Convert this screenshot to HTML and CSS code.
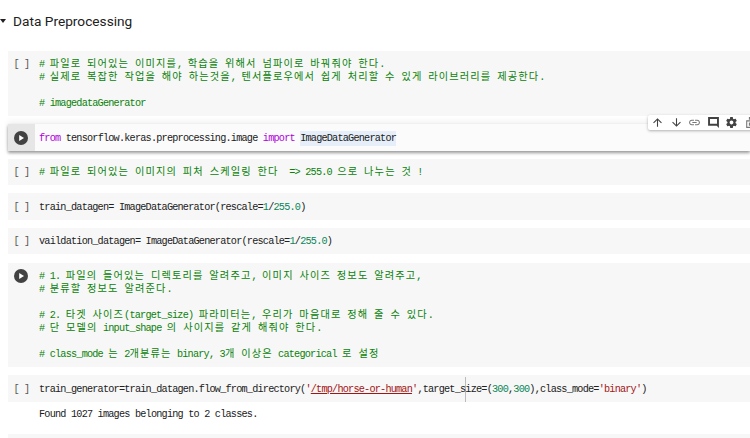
FILE: index.html
```html
<!DOCTYPE html>
<html lang="ko">
<head>
<meta charset="utf-8">
<title>Data Preprocessing</title>
<link rel="stylesheet" href="styles.css">
</head>
<body>
<header class="section">
  <svg class="caret" viewBox="0 0 6 4"><path d="M0 0h6L3 4z"/></svg>
  <h1>Data Preprocessing</h1>
</header>
<main class="cells">
  <section class="cell">
    <div class="gutter">[ ]</div>
<pre class="code com"># <span class="k">파일로 되어있는 이미지를</span>, <span class="k">학습을 위해서 넘파이로 바꿔줘야 한다</span>.
# <span class="k">실제로 복잡한 작업을 해야 하는것을</span>, <span class="k">텐서플로우에서 쉽게 처리할 수 있게 라이브러리를 제공한다</span>.

# imagedataGenerator</pre>
  </section>
  <section class="cell focus">
    <div class="gutter run">
      <svg class="play" viewBox="0 0 14 14"><circle cx="7" cy="7" r="7"/><path class="tri" d="M5.2 3.9v6.2L10 7z"/></svg>
    </div>
<pre class="code"><span class="kw">from</span> tensorflow.keras.preprocessing.image <span class="kw">import</span> <span class="sel">ImageDataGenerator</span></pre>
    <div class="toolbar">
      <svg viewBox="0 0 24 24"><path d="M4 12l1.41 1.41L11 7.83V20h2V7.83l5.58 5.59L20 12l-8-8-8 8z"/></svg>
      <svg viewBox="0 0 24 24"><path d="M20 12l-1.41-1.41L13 16.17V4h-2v12.17l-5.58-5.59L4 12l8 8 8-8z"/></svg>
      <svg viewBox="0 0 24 24"><path class="soft" d="M3.9 12c0-1.71 1.39-3.1 3.1-3.1h4V7H7c-2.76 0-5 2.24-5 5s2.24 5 5 5h4v-1.9H7c-1.71 0-3.1-1.39-3.1-3.1zM8 13h8v-2H8v2zm9-6h-4v1.9h4c1.71 0 3.1 1.39 3.1 3.1s-1.39 3.1-3.1 3.1h-4V17h4c2.76 0 5-2.24 5-5s-2.24-5-5-5z"/></svg>
      <svg viewBox="0 0 24 24"><path fill-rule="evenodd" d="M22 2H2v16h16l4 4V2zM18.500 14.500h-13v-9h13v9z"/></svg>
      <svg viewBox="0 0 24 24"><path d="M19.4 13c.04-.32.1-.66.1-1s-.06-.68-.1-1l2.1-1.65c.2-.15.25-.42.13-.64l-2-3.46c-.12-.22-.39-.3-.61-.22l-2.49 1c-.52-.4-1.08-.73-1.69-.98l-.38-2.65C14.46 2.18 14.25 2 14 2h-4c-.25 0-.46.18-.49.42l-.38 2.65c-.61.25-1.17.59-1.69.98l-2.49-1c-.23-.09-.49 0-.61.22l-2 3.46c-.13.22-.07.49.12.64L4.57 11c-.04.32-.07.66-.07 1s.03.68.07 1l-2.11 1.65c-.19.15-.25.42-.12.64l2 3.46c.12.22.39.3.61.22l2.49-1c.52.4 1.08.73 1.69.98l.38 2.65c.03.24.24.42.49.42h4c.25 0 .46-.18.49-.42l.38-2.65c.61-.25 1.17-.59 1.69-.98l2.49 1c.23.09.49 0 .61-.22l2-3.46c.12-.22.07-.49-.12-.64L19.4 13zM12 15.500c-1.93 0-3.5-1.57-3.5-3.5s1.57-3.5 3.5-3.5 3.5 1.570 3.5 3.5-1.57 3.5-3.5 3.500z"/></svg>
      <svg viewBox="0 0 24 24"><path class="soft" d="M9 2h6v5h-2V4h-2v3H9V2zM4 8h16v14H4V8zm2 2v10h12V10H6zm3 2h2v6H9v-6z"/></svg>
    </div>
  </section>
  <section class="cell">
    <div class="gutter">[ ]</div>
<pre class="code com"># <span class="k">파일로 되어있는 이미지의 피처 스케일링 한다</span>  =&gt; 255.0 <span class="k">으로 나누는 것</span> !</pre>
  </section>
  <section class="cell">
    <div class="gutter">[ ]</div>
<pre class="code">train_datagen= ImageDataGenerator(rescale=<span class="num">1</span>/<span class="num">255.0</span>)</pre>
  </section>
  <section class="cell">
    <div class="gutter">[ ]</div>
<pre class="code">vaildation_datagen= ImageDataGenerator(rescale=<span class="num">1</span>/<span class="num">255.0</span>)</pre>
  </section>
  <section class="cell">
    <div class="gutter run-plain">
      <svg class="play" viewBox="0 0 14 14"><circle cx="7" cy="7" r="7"/><path class="tri" d="M5.2 3.9v6.2L10 7z"/></svg>
    </div>
<pre class="code com"># 1. <span class="k">파일의 들어있는 디렉토리를 알려주고</span>, <span class="k">이미지 사이즈 정보도 알려주고</span>,
# <span class="k">분류할 정보도 알려준다</span>.

# 2. <span class="k">타겟 사이즈</span>(target_size) <span class="k">파라미터는</span>, <span class="k">우리가 마음대로 정해 줄 수 있다</span>.
# <span class="k">단 모델의</span> input_shape <span class="k">의 사이지를 같게 해줘야 한다</span>.

# class_mode <span class="k">는</span> 2<span class="k">개분류는</span> binary, 3<span class="k">개 이상은</span> categorical <span class="k">로 설정</span></pre>
  </section>
  <div class="group">
    <section class="cell">
      <div class="gutter">[ ]</div>
<pre class="code">train_generator=train_datagen.flow_from_directory(<span class="str">'<span class="path">/tmp/horse-or-human</span>'</span>,target_<span class="cursor">s</span>ize=(<span class="num">300</span>,<span class="num">300</span>),class_mode=<span class="str">'binary'</span>)</pre>
    </section>
    <pre class="output">Found 1027 images belonging to 2 classes.</pre>
  </div>
  <section class="cell next"></section>
</main>
</body>
</html>
```

FILE: styles.css
```css
* { box-sizing: border-box; }

html, body {
  margin: 0;
  height: 438px;
  overflow: hidden;
  background: #fff;
}

.section {
  display: flex;
  align-items: center;
  gap: 7px;
  height: 42px;
}

.caret {
  width: 6px;
  height: 4px;
  fill: #212121;
  flex: none;
}

h1 {
  margin: 0;
  font: 400 13.7px/20px Roboto, sans-serif;
  color: #212121;
}

.cells {
  display: flex;
  flex-direction: column;
  gap: 8.3px;
  padding: 8.7px 0 0 8px;
}

.cell {
  position: relative;
  display: flex;
  background: #f7f7f7;
  min-height: 26.3px;
  width: 742px;
}

.gutter {
  flex: none;
  width: 27px;
  padding: 7.3px 0 0 5.5px;
  font: 10.2px/13px "Liberation Mono", monospace;
  letter-spacing: -0.82px;
  color: #555;
}

.run, .run-plain {
  padding: 6.5px 0 0 6px;
}

.run {
  background: #e6e6e6;
}

.play {
  display: block;
  width: 14px;
  height: 14px;
  fill: #424242;
}

.tri {
  fill: #fff;
}

.code, .output {
  margin: 0;
  padding: 7.4px 0 5.9px 4px;
  font: 10.2px/13px "Liberation Mono", "Noto Sans CJK KR", monospace;
  letter-spacing: -0.785px;
  color: #212121;
  white-space: pre;
}

.output {
  padding: 6.5px 0 0 31px;
  height: 24.4px;
}

.k {
  font-family: "Noto Sans CJK KR", sans-serif;
  font-size: 10.2px;
  letter-spacing: 1.15px;
  word-spacing: 1.8px;
  line-height: 1;
}

.com { color: #0a820a; }
.kw { color: #af00db; }
.num { color: #098658; }
.str { color: #a31515; }
.path { text-decoration: underline; }
.sel { background: #e6eff9; padding: 2px 0; }

.cursor {
  border-right: 1px solid #bbb;
  margin-right: -1px;
  padding: 7px 0;
}

.focus {
  background: #fbfbfb;
  box-shadow: 0 2px 3px rgba(0, 0, 0, 0.4), 0 -3px 6px rgba(0, 0, 0, 0.05);
}

.next { min-height: 10px; }

.toolbar {
  position: absolute;
  top: -9px;
  left: 640px;
  display: flex;
  gap: 5.6px;
  align-items: center;
  width: 112px;
  height: 15px;
  padding-left: 3px;
  background: #fff;
  border-radius: 2px;
  box-shadow: 0 1px 3px rgba(0, 0, 0, 0.3);
}

.toolbar svg {
  flex: none;
  width: 13px;
  height: 13px;
  fill: #424242;
}

.soft { fill: #777; }
```
